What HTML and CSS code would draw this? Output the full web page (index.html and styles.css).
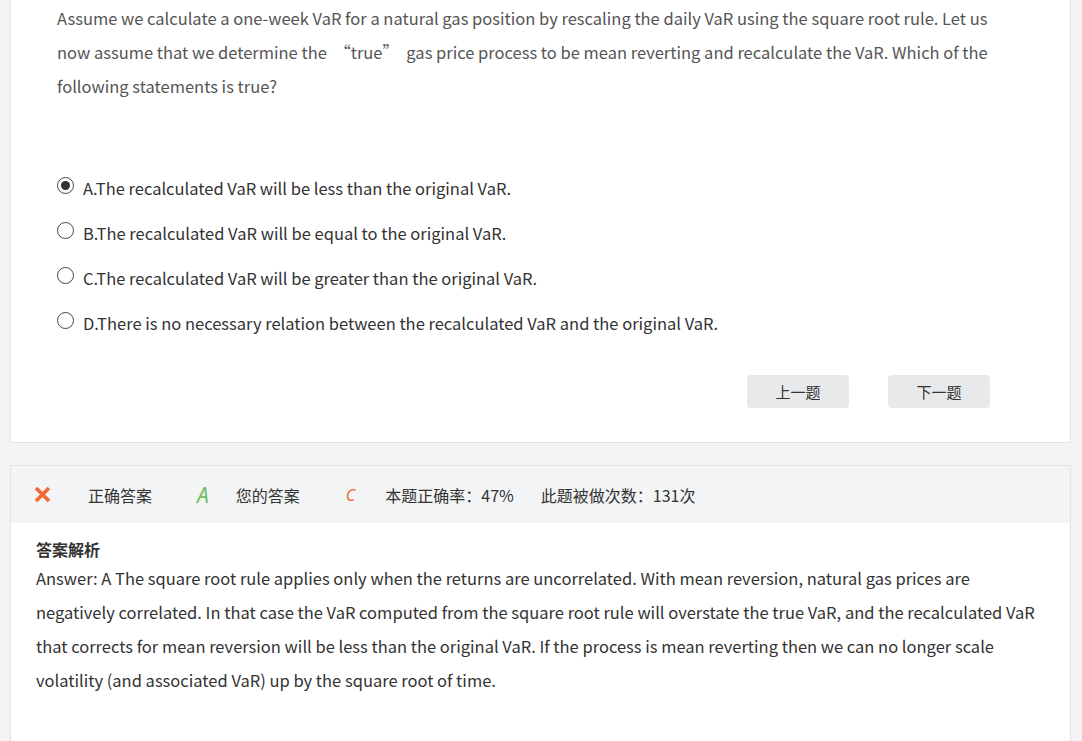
FILE: index.html
```html
<!DOCTYPE html>
<html lang="zh-CN">
<head>
<meta charset="utf-8">
<link rel="stylesheet" href="styles.css">
</head>
<body>
<div class="page">
  <section class="card question-card">
    <p class="stem">Assume we calculate a one-week VaR for a natural gas position by rescaling the daily VaR using the square root rule. Let us now assume that we determine the &nbsp;“true”&nbsp; gas price process to be mean reverting and recalculate the VaR. Which of the following statements is true?</p>
    <ul class="options">
      <li class="option selected"><span class="radio"></span><span>A.The recalculated VaR will be less than the original VaR.</span></li>
      <li class="option"><span class="radio"></span><span>B.The recalculated VaR will be equal to the original VaR.</span></li>
      <li class="option"><span class="radio"></span><span>C.The recalculated VaR will be greater than the original VaR.</span></li>
      <li class="option"><span class="radio"></span><span>D.There is no necessary relation between the recalculated VaR and the original VaR.</span></li>
    </ul>
    <div class="nav">
      <button class="btn">上一题</button>
      <button class="btn">下一题</button>
    </div>
  </section>
  <section class="card answer-card">
    <div class="stats">
      <svg class="wrong" width="17" height="17" viewBox="0 0 17 17"><path d="M2 2 L15 15 M15 2 L2 15" stroke="#f26a35" stroke-width="3.8" stroke-linecap="butt"/></svg>
      <span class="label l1">正确答案</span>
      <span class="letter green">A</span>
      <span class="label l2">您的答案</span>
      <span class="letter orange">C</span>
      <span class="label l3">本题正确率：47%</span>
      <span class="label">此题被做次数：131次</span>
    </div>
    <div class="analysis">
      <h3 class="title">答案解析</h3>
      <p class="answer">Answer: A The square root rule applies only when the returns are uncorrelated. With mean reversion, natural gas prices are negatively correlated. In that case the VaR computed from the square root rule will overstate the true VaR, and the recalculated VaR that corrects for mean reversion will be less than the original VaR. If the process is mean reverting then we can no longer scale volatility (and associated VaR) up by the square root of time.</p>
    </div>
  </section>
</div>
</body>
</html>
```
FILE: styles.css
```css
html, body {
  margin: 0;
  padding: 0;
  background: #f3f3f3;
  font-family: "Noto Sans CJK SC", "Noto Sans", sans-serif;
  color: #333;
  height: 741px;
  overflow: hidden;
}
.page {
  padding: 0 11px 0 10px;
  margin-top: -20px;
}
.card {
  background: #fff;
  border: 1px solid #e4e4e4;
}
.question-card {
  padding: 20px 46px 34px 46px;
}
.stem {
  margin: 0;
  font-size: 16.5px;
  line-height: 34px;
  color: #555;
}
.options {
  list-style: none;
  margin: 62px 0 0 0;
  padding: 0;
}
.option {
  display: flex;
  align-items: center;
  height: 45px;
  font-size: 16.5px;
  color: #333;
}
.radio {
  width: 17px;
  height: 17px;
  border: 1px solid #444;
  border-radius: 50%;
  box-sizing: border-box;
  margin-right: 9px;
  position: relative;
  top: -2px;
  flex: none;
}
.option.selected .radio::after {
  content: "";
  position: absolute;
  left: 3px;
  top: 3px;
  width: 9px;
  height: 9px;
  border-radius: 50%;
  background: #333;
}
.nav {
  display: flex;
  justify-content: flex-end;
  gap: 39px;
  margin-top: 30px;
  padding-right: 34px;
}
.btn {
  width: 102px;
  height: 33px;
  border: none;
  border-radius: 4px;
  background: #e8e9ea;
  color: #333;
  font-family: "Noto Sans CJK SC", sans-serif;
  font-size: 15px;
}
.answer-card {
  margin-top: 22px;
  border-bottom: none;
}
.stats {
  display: flex;
  align-items: center;
  height: 57px;
  background: #f3f4f5;
  padding-left: 23px;
  font-size: 16px;
  color: #333;
}
.wrong {
  margin-right: 37px;
}
.label.l1 { margin-right: 45px; }
.label.l2 { margin-right: 46px; }
.label.l3 { margin-right: 27px; }
.letter {
  font-style: italic;
  font-family: "Noto Sans", sans-serif;
}
.letter.green { color: #6ec05a; font-size: 21px; margin-right: 27px; }
.letter.orange { color: #f26a35; font-size: 16px; margin-right: 30px; }
.analysis {
  padding: 14px 25px 60px 25px;
}
.title {
  margin: 0;
  font-size: 16px;
  font-weight: bold;
  line-height: 24px;
  color: #333;
}
.answer {
  margin: 0;
  font-size: 16.5px;
  line-height: 34px;
  color: #333;
}
```
